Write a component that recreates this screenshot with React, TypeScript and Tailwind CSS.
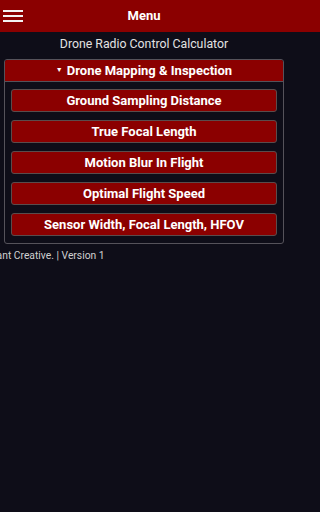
export default function App() {
  const items = [
    "Ground Sampling Distance",
    "True Focal Length",
    "Motion Blur In Flight",
    "Optimal Flight Speed",
    "Sensor Width, Focal Length, HFOV",
  ];

  return (
    <div className="min-h-[512px] w-full bg-[#0e0d18] font-['Roboto',sans-serif] text-white">
      {/* top bar */}
      <header className="bg-[#8b0000]">
        <div className="relative flex h-8 w-[288px] items-center justify-center">
          <div className="absolute left-[3px] top-[10px] flex w-5 flex-col gap-[3px]">
            <span className="block h-[2px] bg-[#f2f2f2]" />
            <span className="block h-[2px] bg-[#f2f2f2]" />
            <span className="block h-[2px] bg-[#f2f2f2]" />
          </div>
          <h1 className="text-[13px] font-bold">Menu</h1>
        </div>
      </header>

      <div className="w-[288px]">
        <p className="mt-[3px] text-center text-[12.3px] leading-[18px] text-[#e2e2e2]">
          Drone Radio Control Calculator
        </p>

        {/* accordion panel */}
        <div className="mx-1 mt-[6px] overflow-hidden rounded-[3px] border border-[#55525a]">
          <div className="flex h-[21px] items-center justify-center gap-[4px] bg-[#8b0000] text-[13px] font-bold">
            <span className="text-[7px] leading-none">▼</span>
            <span>Drone Mapping &amp; Inspection</span>
          </div>
          <div className="flex flex-col gap-[8px] border-t border-[#55525a] px-[6px] pb-[7px] pt-[7px]">
            {items.map((label) => (
              <button
                key={label}
                className="flex h-[23px] items-center justify-center rounded-[3px] border border-[#5a4c4c] bg-[#8b0000] text-[13px] font-bold text-white"
              >
                {label}
              </button>
            ))}
          </div>
        </div>

        {/* footer */}
        <div className="mt-[5px] overflow-hidden whitespace-nowrap text-[10.3px] leading-[14px] text-[#d0d0d0]">
          <span className="ml-[-23px] inline-block">Elegant Creative. | Version 1</span>
        </div>
      </div>
    </div>
  );
}
